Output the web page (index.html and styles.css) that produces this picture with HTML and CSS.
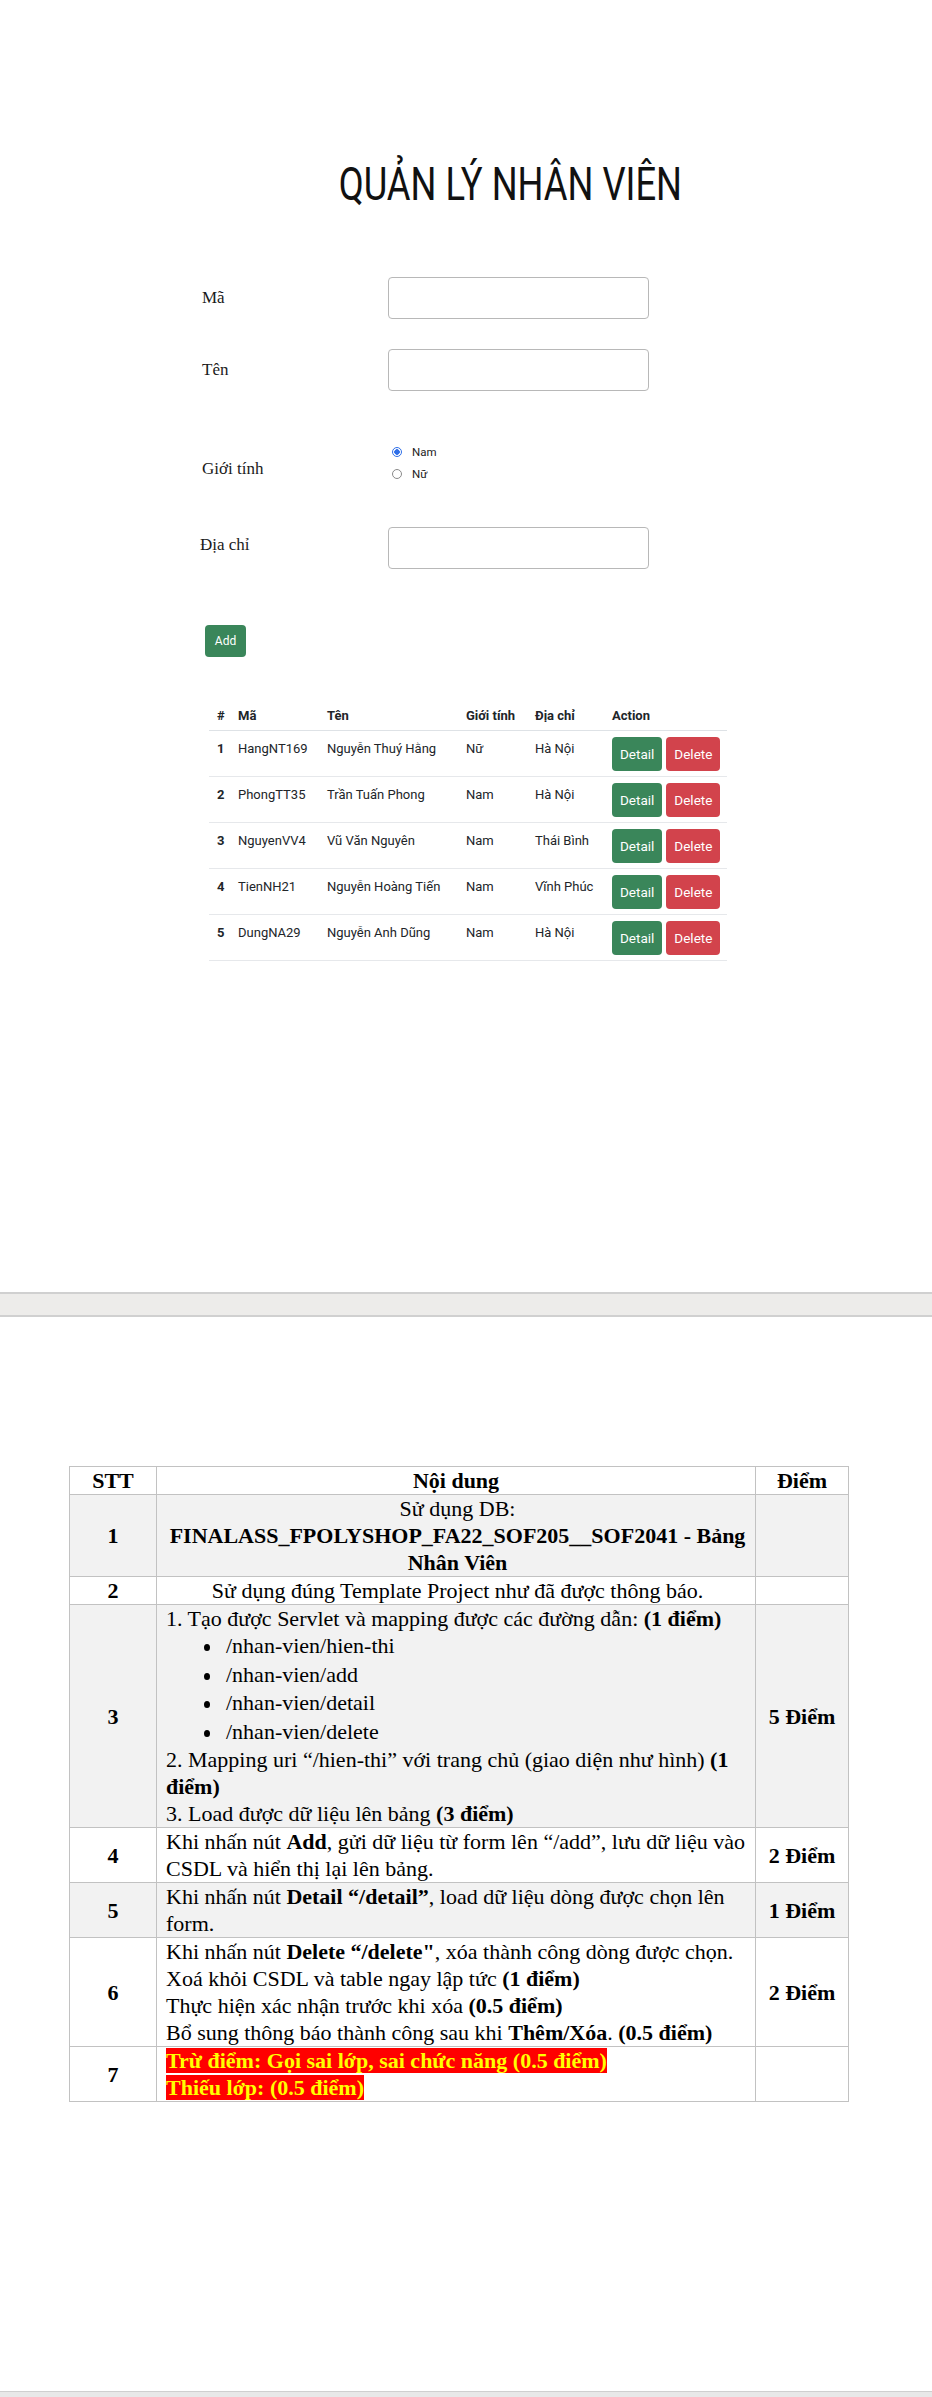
FILE: index.html
```html
<!DOCTYPE html>
<html lang="vi">
<head>
<meta charset="utf-8">
<title>Quản lý nhân viên</title>
<link rel="stylesheet" href="styles.css">
</head>
<body>
<div class="page page-one">
  <h1 class="title"><span>QUẢN LÝ NHÂN VIÊN</span></h1>
  <form class="emp-form">
    <div class="form-row">
      <label class="lbl">Mã</label>
      <input class="txt" type="text">
    </div>
    <div class="form-row row-tight">
      <label class="lbl">Tên</label>
      <input class="txt" type="text">
    </div>
    <div class="form-row row-gender">
      <label class="lbl lbl-gender">Giới tính</label>
      <div class="radios">
        <label class="radio"><span class="dot checked"></span>Nam</label>
        <label class="radio"><span class="dot"></span>Nữ</label>
      </div>
    </div>
    <div class="form-row row-addr">
      <label class="lbl lbl-addr">Địa chỉ</label>
      <input class="txt" type="text">
    </div>
    <button type="button" class="btn btn-green btn-add">Add</button>
  </form>

  <table class="emp-table">
    <colgroup>
      <col class="c-no"><col class="c-ma"><col class="c-ten"><col class="c-gt"><col class="c-dc"><col class="c-act">
    </colgroup>
    <thead>
      <tr><th>#</th><th>Mã</th><th>Tên</th><th>Giới tính</th><th>Địa chỉ</th><th>Action</th></tr>
    </thead>
    <tbody>
      <tr><th>1</th><td>HangNT169</td><td>Nguyễn Thuý Hằng</td><td>Nữ</td><td>Hà Nội</td><td class="act"><span class="btn btn-green">Detail</span><span class="btn btn-red">Delete</span></td></tr>
      <tr><th>2</th><td>PhongTT35</td><td>Trần Tuấn Phong</td><td>Nam</td><td>Hà Nội</td><td class="act"><span class="btn btn-green">Detail</span><span class="btn btn-red">Delete</span></td></tr>
      <tr><th>3</th><td>NguyenVV4</td><td>Vũ Văn Nguyên</td><td>Nam</td><td>Thái Bình</td><td class="act"><span class="btn btn-green">Detail</span><span class="btn btn-red">Delete</span></td></tr>
      <tr><th>4</th><td>TienNH21</td><td>Nguyễn Hoàng Tiến</td><td>Nam</td><td>Vĩnh Phúc</td><td class="act"><span class="btn btn-green">Detail</span><span class="btn btn-red">Delete</span></td></tr>
      <tr><th>5</th><td>DungNA29</td><td>Nguyễn Anh Dũng</td><td>Nam</td><td>Hà Nội</td><td class="act"><span class="btn btn-green">Detail</span><span class="btn btn-red">Delete</span></td></tr>
    </tbody>
  </table>
</div>

<div class="page-gap"></div>

<div class="page page-two">
  <table class="grade">
    <colgroup><col class="g-stt"><col class="g-nd"><col class="g-diem"></colgroup>
    <thead>
      <tr><th>STT</th><th>Nội dung</th><th>Điểm</th></tr>
    </thead>
    <tbody>
      <tr class="shade">
        <td class="stt">1</td>
        <td class="nd center">Sử dụng DB:<br><b>FINALASS_FPOLYSHOP_FA22_SOF205__SOF2041 - Bảng<br>Nhân Viên</b></td>
        <td class="diem"></td>
      </tr>
      <tr>
        <td class="stt">2</td>
        <td class="nd center">Sử dụng đúng Template Project như đã được thông báo.</td>
        <td class="diem"></td>
      </tr>
      <tr class="shade">
        <td class="stt">3</td>
        <td class="nd">1. Tạo được Servlet và mapping được các đường dẫn: <b>(1 điểm)</b>
          <ul class="paths">
            <li>/nhan-vien/hien-thi</li>
            <li>/nhan-vien/add</li>
            <li>/nhan-vien/detail</li>
            <li>/nhan-vien/delete</li>
          </ul>
          2. Mapping uri “/hien-thi” với trang chủ (giao diện như hình) <b>(1<br>điểm)</b><br>
          3. Load được dữ liệu lên bảng <b>(3 điểm)</b>
        </td>
        <td class="diem">5 Điểm</td>
      </tr>
      <tr>
        <td class="stt">4</td>
        <td class="nd">Khi nhấn nút <b>Add</b>, gửi dữ liệu từ form lên “/add”, lưu dữ liệu vào<br>CSDL và hiển thị lại lên bảng.</td>
        <td class="diem">2 Điểm</td>
      </tr>
      <tr class="shade">
        <td class="stt">5</td>
        <td class="nd">Khi nhấn nút <b>Detail “/detail”</b>, load dữ liệu dòng được chọn lên<br>form.</td>
        <td class="diem">1 Điểm</td>
      </tr>
      <tr>
        <td class="stt">6</td>
        <td class="nd">Khi nhấn nút <b>Delete “/delete"</b>, xóa thành công dòng được chọn.<br>Xoá khỏi CSDL và table ngay lập tức <b>(1 điểm)</b><br>Thực hiện xác nhận trước khi xóa <b>(0.5 điểm)</b><br>Bổ sung thông báo thành công sau khi <b>Thêm/Xóa</b>. <b>(0.5 điểm)</b></td>
        <td class="diem">2 Điểm</td>
      </tr>
      <tr>
        <td class="stt">7</td>
        <td class="nd"><span class="hl">Trừ điểm: Gọi sai lớp, sai chức năng (0.5 điểm)</span><br><span class="hl">Thiếu lớp: (0.5 điểm)</span></td>
        <td class="diem"></td>
      </tr>
    </tbody>
  </table>
</div>

<div class="page-gap-bottom"></div>
</body>
</html>
```

FILE: styles.css
```css
html, body {
  margin: 0;
  padding: 0;
  background: #ffffff;
}

.page {
  box-sizing: border-box;
  background: #ffffff;
  overflow: hidden;
}

.page-one {
  height: 1292px;
  padding-top: 158px;
}

.title {
  margin: 0 0 0 190px;
  width: 640px;
  text-align: center;
  font: 400 46px/52px Roboto, "Liberation Sans", sans-serif;
  color: #111111;
}

.title span {
  display: inline-block;
  transform: scaleX(0.79);
}

.emp-form {
  margin: 67px 0 0 202px;
}

.form-row {
  display: flex;
  align-items: center;
  height: 42px;
}

.row-tight {
  margin-top: 30px;
}

.row-gender {
  margin-top: 50px;
  height: 44px;
}

.row-addr {
  margin-top: 42px;
}

.lbl {
  width: 186px;
  flex: none;
  font: 17px "Liberation Serif", serif;
  color: #1a1a1a;
}

.lbl-gender {
  margin-top: 12px;
}

.lbl-addr {
  margin-left: -2px;
  width: 188px;
  margin-top: -6px;
}

.txt {
  width: 261px;
  height: 42px;
  box-sizing: border-box;
  margin: 0;
  padding: 0;
  border: 1.5px solid #b8b8b8;
  border-radius: 4px;
  background: #ffffff;
}

.radios {
  display: flex;
  flex-direction: column;
}

.radio {
  display: flex;
  align-items: center;
  height: 22px;
  font: 11.5px Roboto, "Liberation Sans", sans-serif;
  color: #222222;
}

.dot {
  box-sizing: border-box;
  width: 10px;
  height: 10px;
  margin: 0 10px 0 4px;
  border: 1px solid #8a8a8a;
  border-radius: 50%;
  background: #ffffff;
}

.dot.checked {
  border: 1.5px solid #2f6fe8;
  background: radial-gradient(circle, #2f6fe8 0 2.5px, #ffffff 3px);
}

.btn {
  display: inline-block;
  box-sizing: border-box;
  height: 34px;
  padding: 0 8px;
  border: 0;
  border-radius: 4px;
  font: 13.5px/34px Roboto, "Liberation Sans", sans-serif;
  color: #ffffff;
  vertical-align: top;
}

.btn-green {
  background: #3a865a;
}

.btn-red {
  background: #d2434c;
  margin-left: 4px;
}

.btn-add {
  display: block;
  margin: 56px 0 0 3px;
  width: 41px;
  height: 32px;
  padding: 0;
  text-align: center;
  font-size: 12px;
  line-height: 32px;
}

.emp-table {
  margin: 43px 0 0 209px;
  width: 518px;
  table-layout: fixed;
  border-collapse: collapse;
  font: 13px Roboto, "Liberation Sans", sans-serif;
  color: #212529;
}

.c-no { width: 21px; }
.c-ma { width: 89px; }
.c-ten { width: 139px; }
.c-gt { width: 69px; }
.c-dc { width: 77px; }
.c-act { width: 123px; }

.emp-table thead th {
  padding: 8px 0 7px 8px;
  line-height: 15px;
  text-align: left;
  font-weight: 700;
  border-bottom: 1px solid #dee2e6;
  white-space: nowrap;
}

.emp-table tbody th,
.emp-table tbody td {
  padding: 10px 0 0 8px;
  line-height: 16px;
  text-align: left;
  vertical-align: top;
  border-bottom: 1px solid #e6e8eb;
  white-space: nowrap;
}

.emp-table tbody th {
  font-weight: 700;
}

.emp-table tbody td.act {
  padding: 6px 0 5px 8px;
}

.page-gap {
  height: 21px;
  background: #edecea;
  border-top: 2px solid #d0d0d0;
  border-bottom: 2px solid #d0d0d0;
}

.page-two {
  height: 1074px;
  padding-top: 149px;
}

.grade {
  margin-left: 69px;
  width: 779px;
  table-layout: fixed;
  border-collapse: collapse;
  font: 22px/27px "Liberation Serif", "Times New Roman", serif;
  color: #000000;
}

.g-stt { width: 87px; }
.g-nd { width: 599px; }
.g-diem { width: 93px; }

.grade th,
.grade td {
  border: 1px solid #c2c2c2;
  padding: 0;
}

.grade th {
  font-weight: 700;
  text-align: center;
}

.shade td {
  background: #f2f2f2;
}

.stt {
  text-align: center;
  vertical-align: middle;
  font-weight: 700;
}

.nd {
  padding: 0 6px 0 9px !important;
  vertical-align: top;
}

.nd.center {
  text-align: center;
}

.diem {
  text-align: center;
  vertical-align: middle;
  font-weight: 700;
}

.paths {
  margin: 0;
  padding: 0 0 0 60px;
  list-style: none;
}

.paths li {
  position: relative;
  line-height: 28.5px;
}

.paths li::before {
  content: "";
  position: absolute;
  left: -22px;
  top: 12px;
  width: 6px;
  height: 7px;
  border-radius: 50%;
  background: #000000;
}

.hl {
  background: #ff0000;
  color: #ffff00;
  font-weight: 700;
}

.page-gap-bottom {
  height: 5px;
  background: #e8e8e8;
  border-top: 1px solid #cfcfcf;
}
```
